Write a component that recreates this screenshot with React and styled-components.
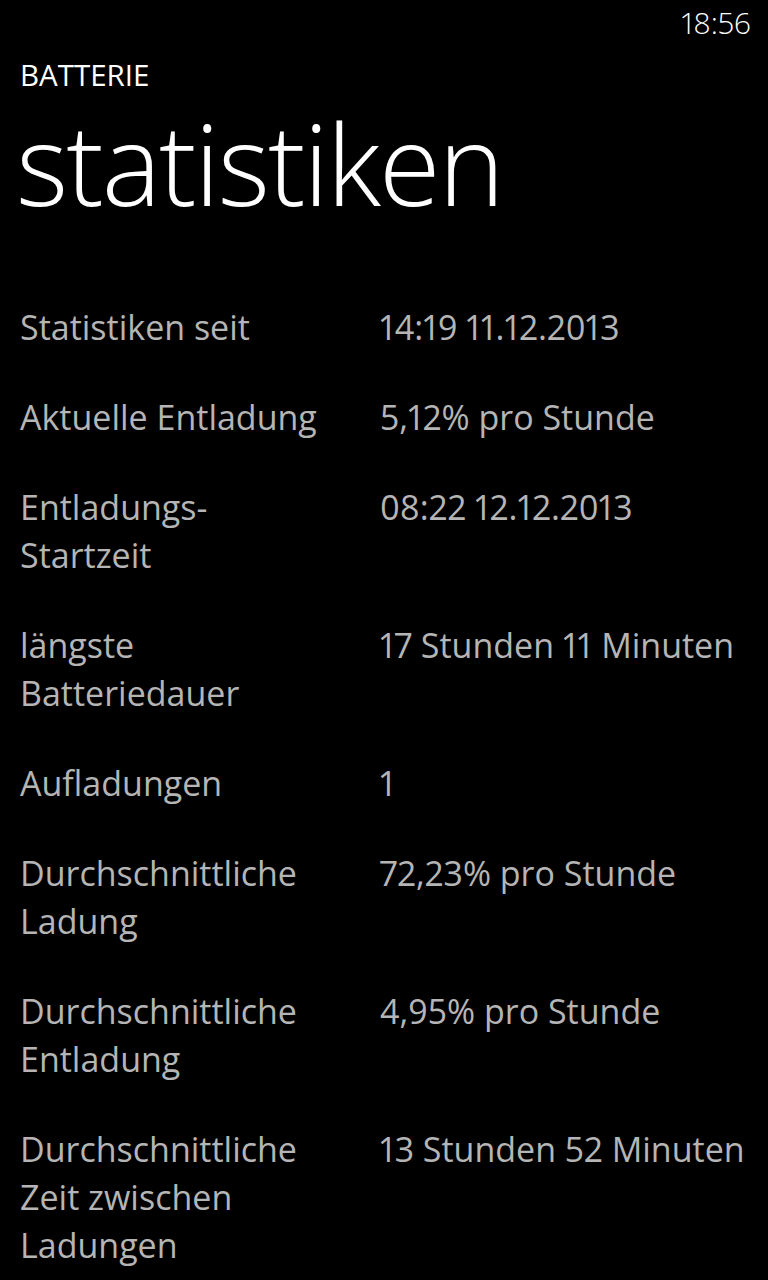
import React from 'react';
import styled, { createGlobalStyle } from 'styled-components';

const Global = createGlobalStyle`
  html, body { margin: 0; padding: 0; background: #000; }
  body {
    font-family: "Open Sans", "Noto Sans", sans-serif;
    font-feature-settings: "pnum";
    color: #fff;
  }
`;

const Screen = styled.div`
  width: 768px;
  height: 1280px;
  background: #000;
  overflow: hidden;
  display: flex;
  flex-direction: column;
`;

const StatusBar = styled.div`
  display: flex;
  justify-content: flex-end;
  padding: 3px 17px 0 0;
`;

const Clock = styled.span`
  font-size: 30px;
  font-weight: 300;
  line-height: 40px;
  color: #fff;
`;

const Header = styled.header`
  display: flex;
  flex-direction: column;
  padding: 12px 0 0 20px;
`;

const AppTitle = styled.div`
  font-size: 29.5px;
  line-height: 40px;
  font-weight: 400;
  color: #fff;
`;

const PageTitle = styled.h1`
  margin: 3px 0 0 -4px;
  font-size: 112px;
  line-height: 130px;
  font-weight: 300;
  letter-spacing: -2px;
  color: #fff;
`;

const StatList = styled.dl`
  margin: 75px 0 0 0;
  padding: 0 0 0 20px;
  display: grid;
  grid-template-columns: 306px 1fr;
  column-gap: 54px;
  row-gap: 42px;
  font-size: 34px;
  line-height: 48px;
  color: #b5b5b5;
`;

const Label = styled.dt`
  margin: 0;
`;

const Value = styled.dd`
  margin: 0;
  white-space: nowrap;
`;

const stats = [
  ['Statistiken seit', '14:19 11.12.2013'],
  ['Aktuelle Entladung', '5,12% pro Stunde'],
  ['Entladungs-Startzeit', '08:22 12.12.2013'],
  ['längste Batteriedauer', '17 Stunden 11 Minuten'],
  ['Aufladungen', '1'],
  ['Durchschnittliche Ladung', '72,23% pro Stunde'],
  ['Durchschnittliche Entladung', '4,95% pro Stunde'],
  ['Durchschnittliche Zeit zwischen Ladungen', '13 Stunden 52 Minuten'],
];

export default function App() {
  return (
    <>
      <Global />
      <Screen>
        <StatusBar>
          <Clock>18:56</Clock>
        </StatusBar>
        <Header>
          <AppTitle>BATTERIE</AppTitle>
          <PageTitle>statistiken</PageTitle>
        </Header>
        <StatList>
          {stats.map(([k, v]) => (
            <React.Fragment key={k}>
              <Label>{k}</Label>
              <Value>{v}</Value>
            </React.Fragment>
          ))}
        </StatList>
      </Screen>
    </>
  );
}
